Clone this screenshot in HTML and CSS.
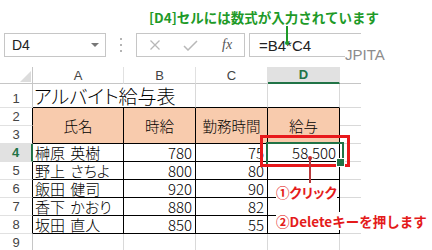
FILE: index.html
```html
<!DOCTYPE html>
<html lang="ja">
<head>
<meta charset="utf-8">
<link rel="stylesheet" href="styles.css">
</head>
<body>
<div class="page">
  <div class="note-top">[D4]セルには数式が入力されています</div>
  <div class="fbar">
    <div class="namebox"><span>D4</span><span class="arrow"></span></div>
    <div class="dots"><i></i><i></i><i></i></div>
    <div class="tools">
      <svg class="ic-x" width="10" height="10" viewBox="0 0 10 10"><path d="M0.5 0.5L9.5 9.5M9.5 0.5L0.5 9.5" stroke="#b8b8b8" stroke-width="1.3" fill="none"/></svg>
      <svg class="ic-ok" width="15" height="11" viewBox="0 0 15 11"><path d="M1 6L5 10L14 1" stroke="#b8b8b8" stroke-width="1.5" fill="none"/></svg>
      <span class="fx">fx</span>
    </div>
    <div class="finput">=B4*C4</div>
  </div>
  <div class="sheet">
    <div class="corner"><span class="tri"></span></div>
    <div class="ch">A</div>
    <div class="ch">B</div>
    <div class="ch">C</div>
    <div class="ch ch-sel">D</div>
    <div class="ch ch-last"></div>

    <div class="rh rh1">1</div>
    <div class="title">アルバイト給与表</div>
    <div class="tb"></div>
    <div class="tb"></div>
    <div class="e"></div>

    <div class="rh rt">2</div>
    <div class="hd">氏名</div>
    <div class="hd">時給</div>
    <div class="hd">勤務時間</div>
    <div class="hd">給与</div>
    <div class="e"></div>
    <div class="rh rt">3</div>
    <div class="e"></div>

    <div class="rh rh-sel">4</div>
    <div class="t name">榊原 英樹</div>
    <div class="t num">780</div>
    <div class="t num">75</div>
    <div class="t num cur">58,500</div>
    <div class="e"></div>

    <div class="rh rt">5</div>
    <div class="t name">野上 さちよ</div>
    <div class="t num">800</div>
    <div class="t num">80</div>
    <div class="t num"></div>
    <div class="e"></div>

    <div class="rh rt">6</div>
    <div class="t name">飯田 健司</div>
    <div class="t num">920</div>
    <div class="t num">90</div>
    <div class="t num"></div>
    <div class="e"></div>

    <div class="rh rt">7</div>
    <div class="t name">香下 かおり</div>
    <div class="t num">880</div>
    <div class="t num">82</div>
    <div class="t num"></div>
    <div class="e"></div>

    <div class="rh rt">8</div>
    <div class="t name">坂田 直人</div>
    <div class="t num">850</div>
    <div class="t num">55</div>
    <div class="t num"></div>
    <div class="e"></div>

    <div class="rh">9</div>
    <div></div>
    <div></div>
    <div></div>
    <div></div>
    <div class="e"></div>
  </div>

  <div class="note-line"></div>
  <div class="jpita">JPITA</div>
  <div class="redbox"></div>
  <div class="red-line"></div>
  <div class="lbl lbl1">①クリック</div>
  <div class="lbl lbl2">②Deleteキーを押します</div>
</div>
</body>
</html>
```
FILE: styles.css
```css
* { box-sizing: border-box; }
body { margin: 0; background: #fff; font-family: "Liberation Sans", Arial, sans-serif; }
.page { position: relative; width: 432px; height: 250px; overflow: hidden; background: #fff; }

.note-top {
  height: 33px;
  padding: 9px 0 0 149px;
  font: bold 13.5px/17px "Noto Sans CJK JP", sans-serif;
  color: #1e9a28;
  white-space: nowrap;
}
.note-line { position: absolute; left: 286px; top: 26px; width: 2px; height: 17px; background: #1e9a28; }
.note-line::after { content: ""; position: absolute; left: -1px; bottom: -2px; width: 4px; height: 4px; border-radius: 50%; background: #1e9a28; }

.fbar { display: flex; height: 24px; padding-left: 4px; }
.namebox {
  width: 102px; border: 1px solid #c6c6c6;
  display: flex; align-items: center; justify-content: space-between;
  padding: 0 6px 0 7px; font-size: 14px; color: #222;
}
.arrow { width: 0; height: 0; border-left: 4px solid transparent; border-right: 4px solid transparent; border-top: 4px solid #777; }
.dots { width: 30px; display: flex; flex-direction: column; align-items: center; justify-content: center; gap: 4px; }
.dots i { display: block; width: 2px; height: 2px; background: #b4b4b4; }
.tools { width: 109px; border: 1px solid #c6c6c6; display: flex; align-items: center; padding-left: 13px; }
.ic-ok { margin-left: 23px; }
.fx { margin-left: 24px; font: italic 14px/14px "Liberation Serif", serif; color: #555; }
.finput {
  margin-left: 4px; width: 112px; border: 1px solid #c6c6c6; border-right: 0;
  padding-left: 9px; font-size: 15px; color: #222; display: flex; align-items: center;
}
.jpita { position: absolute; left: 345px; top: 47px; font-size: 15px; line-height: 15px; color: #8c8c8c; background: #fff; }

.sheet {
  margin-top: 10px;
  display: grid;
  grid-template-columns: 33px 91px 72px 72px 72px 21px;
  grid-template-rows: 17px 24px repeat(8, 18px);
}
.sheet > div {
  border-right: 1px solid #d9d9d9;
  border-bottom: 1px solid #d9d9d9;
  display: flex; align-items: flex-end;
  font: 300 15px/17px "Noto Sans CJK JP", sans-serif;
  font-feature-settings: "palt";
  white-space: nowrap; color: #000;
}
.sheet > .e { border-right: 0; }

.sheet > .corner { justify-content: flex-end; padding: 0 1px 1px 0; border-bottom-color: #c6c6c6; border-right-color: #c6c6c6; }
.tri { width: 0; height: 0; border-left: 11px solid transparent; border-bottom: 11px solid #dcdcdc; }
.sheet > .ch {
  justify-content: center; align-items: center;
  font: 13px/15px "Liberation Sans", Arial, sans-serif; color: #444;
  border-bottom-color: #c6c6c6; border-right-color: #e1e1e1;
}
.sheet > .ch-last { border-right: 0; }
.sheet > .ch-sel { background: #e1e1e1; color: #217346; font-weight: bold; border-bottom: 2px solid #217346; }

.sheet > .rh {
  justify-content: center; align-items: center;
  font: 13px/15px "Liberation Sans", Arial, sans-serif; color: #444;
  border-right-color: #c6c6c6; border-bottom-color: #e1e1e1;
}
.sheet > .rh1 { align-items: flex-end; padding-bottom: 1px; }
.sheet > .rt { border-right-color: #000; }
.sheet > .rh-sel { background: #e1e1e1; color: #217346; font-weight: bold; border-right: 2px solid #217346; }

.sheet > .title { grid-column: span 2; font-size: 19px; line-height: 22px; padding-left: 1px; border-bottom-color: #000; }
.sheet > .tb { border-bottom-color: #000; }

.sheet > .hd {
  grid-row: span 2; background: #f8cbad;
  border-right-color: #000; border-bottom-color: #000;
  justify-content: center; align-items: center; font-size: 14.5px;
}
.sheet > .t { border-right-color: #000; border-bottom-color: #000; }
.sheet > .name { padding-left: 2px; word-spacing: 2px; }
.sheet > .num { justify-content: flex-end; padding-right: 3px; }

.sheet > .cur { position: relative; }
.cur::after {
  content: ""; position: absolute; left: -2px; top: -2px; width: 74px; height: 21px;
  border: 2px solid #217346;
}
.cur::before {
  content: ""; position: absolute; left: 68px; top: 14px; width: 7px; height: 7px;
  background: #217346; border: 1px solid #fff; z-index: 1;
}

.redbox { position: absolute; left: 260px; top: 135px; width: 90px; height: 32px; border: 3px solid #e8191c; }
.red-line { position: absolute; left: 309px; top: 157px; width: 2px; height: 27px; background: #b83a3c; }
.red-line::before { content: ""; position: absolute; left: -1px; top: -1px; width: 4px; height: 4px; border-radius: 50%; background: #c8282a; }

.lbl {
  position: absolute; background: #fff; color: #e41b1b;
  font: bold 13.5px/16px "Noto Sans CJK JP", sans-serif; white-space: nowrap;
  padding: 1px 0;
}
.lbl1 { left: 276px; top: 183px; font-feature-settings: "palt"; }
.lbl2 { left: 276px; top: 212px; }
```
